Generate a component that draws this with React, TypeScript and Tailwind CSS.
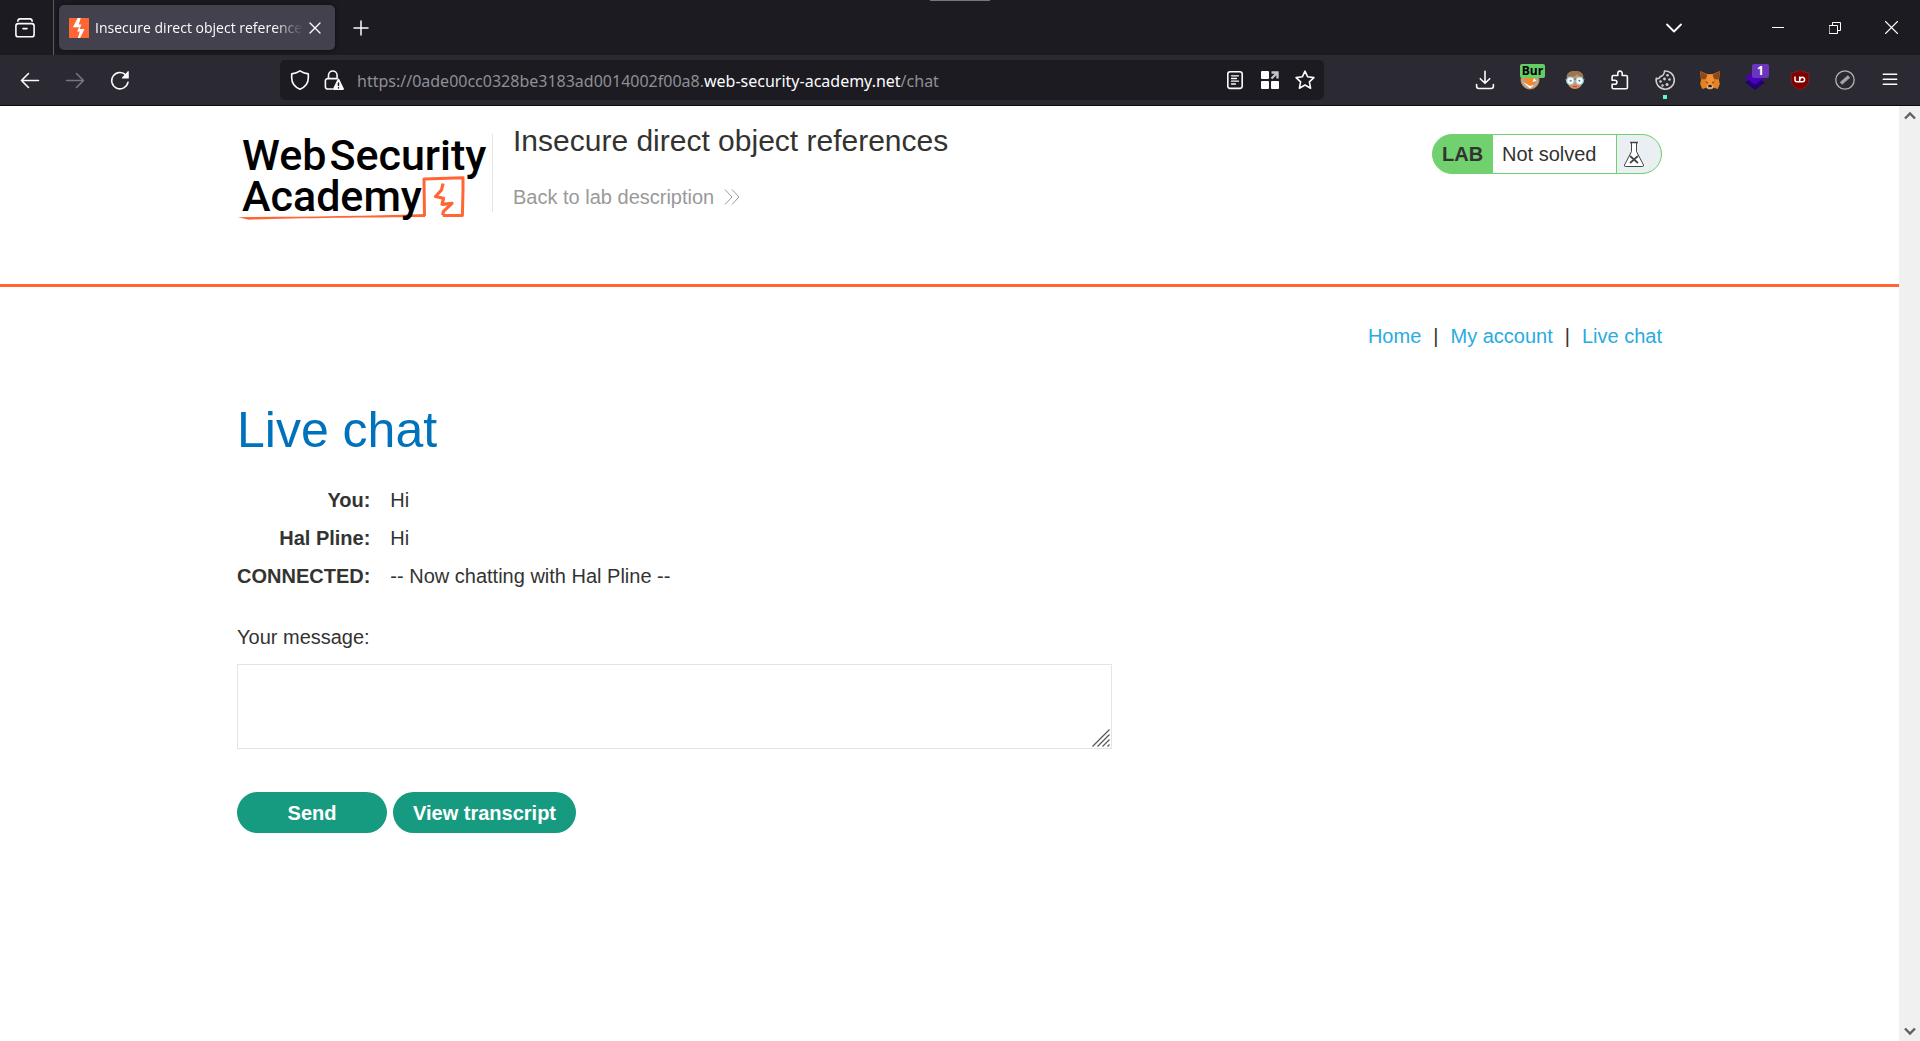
import React from "react";

type IconProps = { children: React.ReactNode; className?: string; box?: string };

function Icon({ children, className = "size-5", box = "0 0 20 20" }: IconProps) {
  return (
    <svg
      viewBox={box}
      className={className}
      fill="none"
      stroke="currentColor"
      strokeWidth="1.6"
      strokeLinecap="round"
      strokeLinejoin="round"
      aria-hidden="true"
    >
      {children}
    </svg>
  );
}

function ToolButton({ label, children, className = "" }: { label: string; children: React.ReactNode; className?: string }) {
  return (
    <button type="button" aria-label={label} className={`relative flex h-10 w-[45px] shrink-0 items-center justify-center ${className}`}>
      {children}
    </button>
  );
}

function TabBar() {
  return (
    <div className="relative flex h-[55px] items-center bg-[#1c1b22] text-[#fbfbfe]">
      <div className="absolute left-1/2 top-0 h-px w-[60px] -translate-x-1/2 bg-[#77767c]" />
      <button type="button" aria-label="Firefox View" className="flex h-full w-[54px] items-center justify-center border-r border-[#5b5a62] pr-1">
        <Icon>
          <rect x="0.9" y="5.6" width="18.2" height="13.2" rx="2.4" />
          <path d="M2.800 3.200C3 1.600 3.700.9 5 .9h10c1.300 0 2 .7 2.200 2.300M8 10.600h4" />
        </Icon>
      </button>
      <div className="ml-[5px] flex h-[45px] w-[276px] items-center rounded-[5px] bg-[#42414d] pl-[10px] pr-2 shadow-[0_0_4px_rgba(0,0,0,0.6)]">
        <svg viewBox="0 0 20 20" className="size-5 shrink-0" aria-hidden="true">
          <path fill="#ff6633" d="M0 0h20v20H0z" />
          <path fill="#fff" d="M8.700 0h3L9.800 6.600h2.500L10.600 11h4.900L11 20H8.900l1.800-6.600H8.200L10 9.200H3.900z" />
        </svg>
        <span className="ml-[6px] flex-1 overflow-hidden whitespace-nowrap font-['Open_Sans',sans-serif] text-[14px] [mask-image:linear-gradient(to_right,black_86%,transparent)]">
          Insecure direct object references
        </span>
        <button type="button" aria-label="Close tab" className="flex size-6 items-center justify-center">
          <Icon className="size-3" box="0 0 12 12">
            <path strokeWidth="1.400" d="m1 1 10 10M11 1 1 11" />
          </Icon>
        </button>
      </div>
      <button type="button" aria-label="New tab" className="ml-[6px] flex size-10 items-center justify-center">
        <Icon className="size-4" box="0 0 16 16">
          <path strokeWidth="1.500" d="M8 1v14M1 8h14" />
        </Icon>
      </button>
      <div className="flex-1" />
      <button type="button" aria-label="List all tabs" className="mr-[55px] flex size-10 items-center justify-center">
        <Icon className="size-4" box="0 0 16 16">
          <path strokeWidth="1.800" d="m1 4.500 7 7 7-7" />
        </Icon>
      </button>
      <button type="button" aria-label="Minimize" className="flex h-full w-[57px] items-center justify-center">
        <Icon className="h-3 w-3" box="0 0 12 12">
          <path strokeWidth="1" strokeLinecap="butt" d="M0 5.500h12" />
        </Icon>
      </button>
      <button type="button" aria-label="Restore" className="flex h-full w-[57px] items-center justify-center">
        <Icon className="h-3 w-3" box="0 0 12 12">
          <path strokeWidth="1" strokeLinejoin="miter" d="M.5 3.500h8v8h-8zM3.500 3.500v-3h8v8h-3" />
        </Icon>
      </button>
      <button type="button" aria-label="Close window" className="flex h-full w-[57px] items-center justify-center">
        <Icon className="size-[13px]" box="0 0 13 13">
          <path strokeWidth="1.100" d="m.5.5 12 12M12.500.5l-12 12" />
        </Icon>
      </button>
    </div>
  );
}

function AddressBar() {
  return (
    <div className="mx-[138px] flex h-10 min-w-0 flex-1 items-center rounded-[5px] bg-[#1c1b22]">
      <button type="button" aria-label="Tracking protection" className="ml-[10px] flex size-5 items-center justify-center">
        <Icon>
          <path d="M10 .9c2.400 1.700 5 2.500 8.300 3v4c0 5.200-3 9-8.300 11.300C4.700 17 1.700 13.200 1.700 8V3.900C5 3.400 7.600 2.600 10 .9z" />
        </Icon>
      </button>
      <button type="button" aria-label="Site information" className="ml-[14px] flex size-5 items-center justify-center">
        <Icon>
          <path d="M4.500 8.500V5.300a4.300 4.300 0 0 1 8.600 0v3.200M8.500 19H3.600A2.200 2.200 0 0 1 1.400 16.800v-6a2.200 2.200 0 0 1 2.200-2.200h9.600" />
          <path fill="currentColor" stroke="none" d="M13.600 9.200a1 1 0 0 1 1.700 0l4.500 9.200a1 1 0 0 1-.9 1.500H10a1 1 0 0 1-.9-1.500z" />
          <path stroke="#1c1b22" strokeWidth="1.500" d="M14.500 13v2.500M14.500 17.800v.1" />
        </Icon>
      </button>
      <div className="ml-[13px] min-w-0 flex-1 truncate pt-0.5 font-['Noto_Sans',sans-serif] text-[16px] text-[#8f8f95]">
        https://0ade00cc0328be3183ad0014002f00a8.<span className="text-[#fbfbfe]">web-security-academy.net</span>/chat
      </div>
      <button type="button" aria-label="Reader view" className="flex w-[35px] justify-center">
        <Icon>
          <rect x="2.800" y="1.800" width="14.400" height="16.600" rx="2.300" />
          <path strokeWidth="1.300" d="M6.500 5.800h7M6.500 8.500h5M6.500 11.200h7M6.500 14h4" />
        </Icon>
      </button>
      <button type="button" aria-label="Open in container" className="flex w-[35px] justify-center">
        <svg viewBox="0 0 20 20" className="size-5" aria-hidden="true">
          <g fill="#fbfbfe">
            <rect x="1" y="1" width="8" height="8" rx="1" />
            <rect x="1" y="11" width="8" height="8" rx="1" />
            <rect x="11" y="11" width="8" height="8" rx="1" />
          </g>
          <path d="M11.500 2.500h6v6M17 3l-5.500 5.500" fill="none" stroke="#c4c4c8" strokeWidth="2.400" />
        </svg>
      </button>
      <button type="button" aria-label="Bookmark this page" className="mr-[2px] flex w-[35px] justify-center">
        <Icon>
          <path d="m10 1.200 2.700 5.600 6.200.8-4.500 4.200 1.200 6.400L10 15l-5.600 3.200 1.200-6.400-4.500-4.200 6.200-.8z" />
        </Icon>
      </button>
    </div>
  );
}

function Extensions() {
  return (
    <div className="mr-2 flex shrink-0">
      <ToolButton label="Downloads">
        <Icon>
          <path d="M10 1.200v12M5.300 8.700 10 13.300l4.700-4.600M1.600 14.500v1.800c0 1.300.8 2.200 2.200 2.200h12.400c1.400 0 2.200-.9 2.200-2.200v-1.800" />
        </Icon>
      </ToolButton>
      <ToolButton label="FoxyProxy">
        <svg viewBox="0 0 20 20" className="size-5" aria-hidden="true">
          <circle cx="10" cy="10" r="9" fill="#a9aaa9" stroke="#e08a3a" />
          <path fill="#f4872a" d="m2 5 6 3 9-3-1.500 8-5.500 4-5-4z" />
          <path fill="#fff" d="m3 12 7 4 4-1-4 3.500zM14 8l2.500 3-4 1z" />
        </svg>
        <span className="absolute left-[13px] top-[4px] flex h-[14px] w-[25px] items-center justify-center rounded-[2px] bg-[#66cc66] font-['Open_Sans',sans-serif] text-[12px] font-bold text-black">
          Bur
        </span>
      </ToolButton>
      <ToolButton label="User agent switcher">
        <svg viewBox="0 0 20 20" className="size-5" aria-hidden="true">
          <path fill="#d98b62" d="M2 8c0-5 3-7 8-7s8 2 8 7c0 7-3 11-8 11S2 15 2 8z" />
          <path fill="#9a7650" d="M1.500 7.500C1.500 3 5 1 10 1s8.500 2 8.500 6.500c-3 0-5.500-1-6.500-3.500-2 2.500-6 4.500-10.500 3.500z" />
          <path stroke="#4e555a" strokeWidth="1.600" d="M0 9.500h20" />
          <g fill="#f2fdff" stroke="#9ccfdc" strokeWidth="1.200">
            <circle cx="5.400" cy="10.800" r="3.700" />
            <circle cx="14.600" cy="10.800" r="3.700" />
          </g>
          <g fill="#5f7f88">
            <circle cx="5.600" cy="10.800" r="1" />
            <circle cx="14.400" cy="10.800" r="1" />
          </g>
          <path stroke="#a65243" d="M8 16.500h4" />
        </svg>
      </ToolButton>
      <ToolButton label="Extensions">
        <Icon>
          <path d="M5.500 5.500h2.300V3.300a2.200 2.200 0 0 1 4.400 0v2.200h3.900c.8 0 1.300.5 1.300 1.300v10.700c0 .8-.5 1.300-1.300 1.300H3.400c-.8 0-1.300-.5-1.300-1.300v-3.300h2.800a2 2 0 0 0 0-4H2.100V6.800c0-.8.5-1.300 1.300-1.300z" />
        </Icon>
      </ToolButton>
      <ToolButton label="Cookie editor" className="text-[#d0d0d4]">
        <Icon>
          <path d="M9.500 1a9.100 9.100 0 1 1-8.200 7.300c1.800.8 3.500 0 3.900-1.800C7.500 6.300 9.500 4 9.500 1z" />
          <g fill="currentColor" stroke="none">
            <circle cx="12.500" cy="5.200" r="1.300" />
            <circle cx="9.500" cy="9" r="1.400" />
            <circle cx="14.500" cy="9.500" r="1.300" />
            <circle cx="5.500" cy="11.500" r="1.300" />
            <circle cx="12" cy="14.500" r="1.500" />
            <circle cx="7.500" cy="15.500" r="1.200" />
          </g>
        </Icon>
        <span className="absolute bottom-[1px] size-1 bg-[#54ffbd]" />
      </ToolButton>
      <ToolButton label="MetaMask">
        <svg viewBox="0 0 20 20" className="size-5" aria-hidden="true">
          <path fill="#e8821e" d="m0 1 7 3h6l7-3-1 9 .8 4-2 5-4-1.200-2.200 1.500H8.400l-2.200-1.500-4 1.200-2-5L1 10z" />
          <path fill="#8f4a1c" d="m0 1 7.500 4-1.500 4-4.500.5zM20 1l-7.500 4 1.500 4 4.500.5z" />
          <path fill="#f59035" d="m6 9 1.500-4h5L14 9l-2 6H8z" />
          <path fill="#243447" d="m5 11 3 1.500-.5 1zM15 11l-3 1.500.5 1z" />
          <path fill="#d8cbbb" d="m7 15.500 6-.1-.5 3.200h-5z" />
          <path fill="#20222a" d="M8.500 15h3l.4 2.200H8.100z" />
        </svg>
      </ToolButton>
      <ToolButton label="Wappalyzer">
        <svg viewBox="0 0 20 20" className="size-5" aria-hidden="true">
          <path fill="#230073" d="M0 12.500 10 6l10 6.500L10 20z" />
          <path fill="#4a00b8" d="M0 7.500 10 0l10 7.500-10 7z" />
        </svg>
        <span className="absolute left-[20px] top-[4px] flex h-[14px] w-[17px] items-center justify-center rounded-[2px] bg-[#6b35bd] font-['Open_Sans',sans-serif] text-[12px] font-bold text-white">
          1
        </span>
      </ToolButton>
      <ToolButton label="uBlock Origin">
        <svg viewBox="0 0 20 20" className="size-5" aria-hidden="true">
          <path fill="#800000" stroke="#8f3b40" strokeWidth=".5" d="M10 0c2.500 1.800 5 2.500 9 3v6c0 5-3 8.500-9 11-6-2.500-9-6-9-11V3c4-.5 6.500-1.200 9-3z" />
          <path d="M5 6.500v3.300c0 1.400.6 2 1.900 2h2.800V6.500M9.700 11.800h2.600a2.300 2.300 0 0 0 0-4.600 2.300 2.300 0 0 0-2.300 2.300" fill="none" stroke="#fff" strokeWidth="1.500" />
        </svg>
      </ToolButton>
      <ToolButton label="Disabled extension">
        <svg viewBox="0 0 20 20" className="size-5" fill="none" aria-hidden="true">
          <circle cx="10" cy="10" r="9.200" stroke="#b4b4b8" strokeWidth="1.300" />
          <path d="m6 13.500 8-7" stroke="#a5a5a9" strokeWidth="3.500" />
          <path d="m7.500 14 7-6" stroke="#6a6970" strokeWidth="1" strokeDasharray="1 1" />
        </svg>
      </ToolButton>
      <ToolButton label="Open application menu">
        <Icon>
          <path strokeWidth="1.500" d="M3.300 4.200h13.400M3.300 9.200h13.400M3.300 14.200h13.400" />
        </Icon>
      </ToolButton>
    </div>
  );
}

function Toolbar() {
  return (
    <div className="flex h-[51px] items-center border-b border-[#0c0c0d] bg-[#2b2a33] text-[#fbfbfe]">
      <div className="flex shrink-0 pl-[7px]">
        <ToolButton label="Back">
          <Icon>
            <path d="M18.500 10.500h-17M8.500 3.500l-7 7 7 7" />
          </Icon>
        </ToolButton>
        <ToolButton label="Forward" className="text-[#77767c]">
          <Icon>
            <path d="M1.500 10.500h17M11.500 3.500l7 7-7 7" />
          </Icon>
        </ToolButton>
        <ToolButton label="Reload">
          <Icon>
            <path d="M18 12.200A8.200 8.200 0 1 1 16 5.100" />
            <path fill="currentColor" stroke="none" d="M18.800 1.700v6.200c0 .5-.3.700-.7.700h-5.500c-.8 0-1-.7-.5-1.200l5.500-6c.5-.5 1.200-.3 1.200.3z" />
          </Icon>
        </ToolButton>
      </div>
      <AddressBar />
      <Extensions />
    </div>
  );
}

function AcademyLogo() {
  return (
    <a href="#academy" className="relative flex h-[90px] w-[255px] shrink-0 flex-col pl-[5px] pt-[1px] font-['Roboto',sans-serif] text-[43px] font-medium leading-[41px] text-black">
      <svg viewBox="0 0 255 90" className="absolute left-0 top-0 h-[90px] w-[255px]" fill="none" stroke="#ff6633" strokeLinejoin="round" aria-hidden="true">
        <path strokeWidth="3" d="M187.500 82 187 45l39-1.200 0 12-.6 25.600-19.600.2" />
        <path fill="#ff6633" stroke="none" d="M1 83.300c60-.8 125-1 187-3.300v3c-60 .5-130 1-176 2.700z" />
        <path strokeWidth="3.200" d="M206 49.500 204.500 56l-6 6.500 8 1.800-1.500 6 10-1-8.500 8-.8 4" />
      </svg>
      <span className="relative flex gap-[3px]">
        <span>Web</span>
        <span>Security</span>
      </span>
      <span className="relative">Academy</span>
    </a>
  );
}

function LabStatus() {
  return (
    <div className="flex h-10 overflow-hidden rounded-full border border-[#71d16e] bg-[#71d16e] text-[20px] leading-[38px]">
      <span className="w-[60px] pl-[9px] font-bold">LAB</span>
      <span className="w-[123px] bg-white pl-[9px]">Not solved</span>
      <span className="ml-px flex w-[44px] items-center bg-[#eaeff3] pl-[6px]">
        <svg viewBox="0 0 22 26" className="h-[26px] w-[22px]" fill="none" stroke="#444" aria-hidden="true">
          <path fill="#fff" d="M8.500 1.500v9L1.500 24q-.3 1.500 1 1.500h17q1.300 0 1-1.500l-7-13.500v-9z" />
          <path strokeWidth="1.500" d="M7 1.500h8" />
          <path strokeWidth="1.700" d="m7 15 8 7M15 15l-8 7" />
        </svg>
      </span>
    </div>
  );
}

function PageHeader() {
  return (
    <header className="h-[181px] border-b-[3px] border-[#ff6633]">
      <div className="mx-auto flex max-w-[1425px] items-start pt-[28px]">
        <AcademyLogo />
        <div className="h-[78px] border-l border-[#e4e4e4]" />
        <div className="pl-5">
          <h2 className="-mt-[11px] text-[30px] leading-9">Insecure direct object references</h2>
          <a href="#lab" className="mt-[26px] flex items-center gap-[10px] text-[20px] leading-6 text-[#999]">
            Back to lab description
            <svg viewBox="0 0 16 16" className="size-4" fill="none" stroke="#999" aria-hidden="true">
              <path d="m1 .5 7 7.500-7 7.500M8 .5l7 7.500-7 7.500" />
            </svg>
          </a>
        </div>
        <div className="ml-auto">
          <LabStatus />
        </div>
      </div>
    </header>
  );
}

const messages = [
  { from: "You:", text: "Hi" },
  { from: "Hal Pline:", text: "Hi" },
  { from: "CONNECTED:", text: "-- Now chatting with Hal Pline --" },
];

function Chat() {
  return (
    <main className="mx-auto max-w-[1425px] text-[20px] leading-6">
      <nav className="flex justify-end gap-3 pt-[37px]">
        <a href="#home" className="text-[#29abe2]">Home</a>
        <span>|</span>
        <a href="#account" className="text-[#29abe2]">My account</a>
        <span>|</span>
        <a href="#chat" className="text-[#29abe2]">Live chat</a>
      </nav>
      <h1 className="mt-[52px] text-[50px] leading-[60px] text-[#0072bc]">Live chat</h1>
      <table className="mt-[21px]">
        <tbody>
          {messages.map((m) => (
            <tr key={m.from} className="h-[38px]">
              <th scope="row" className="pr-5 text-right font-bold">{m.from}</th>
              <td>{m.text}</td>
            </tr>
          ))}
        </tbody>
      </table>
      <form onSubmit={(e) => e.preventDefault()}>
        <label htmlFor="message" className="mt-[30px] block">Your message:</label>
        <div className="relative mt-[15px] h-[85px] max-w-[875px]">
          <textarea id="message" name="message" className="block size-full resize-none border border-[#e4e4e4] bg-white p-2 outline-none" />
          <svg viewBox="0 0 18 18" className="pointer-events-none absolute bottom-[2px] right-[2px] size-[18px]" fill="none" stroke="#555" aria-hidden="true">
            <path strokeWidth="1.200" d="M.5 17.500l17-17M5.500 17.500l12-12M10.500 17.500l7-7M15.500 17.500l2-2" />
          </svg>
        </div>
        <div className="mt-[43px] flex gap-[6px] font-bold text-white">
          <button type="submit" className="h-[41px] w-[150px] rounded-full bg-[#179b80]">Send</button>
          <button type="button" className="h-[41px] w-[183px] rounded-full bg-[#179b80]">View transcript</button>
        </div>
      </form>
    </main>
  );
}

function Scrollbar() {
  return (
    <div className="flex w-[21px] shrink-0 flex-col items-center justify-between bg-[#f0f0f0] py-1 text-[#606060]">
      <Icon className="size-3" box="0 0 12 12">
        <path strokeWidth="2.400" strokeLinecap="butt" strokeLinejoin="miter" d="m1 8.500 5-5 5 5" />
      </Icon>
      <Icon className="size-3" box="0 0 12 12">
        <path strokeWidth="2.400" strokeLinecap="butt" strokeLinejoin="miter" d="m1 3.500 5 5 5-5" />
      </Icon>
    </div>
  );
}

export default function App() {
  return (
    <div className="flex min-h-screen flex-col bg-white font-['Liberation_Sans',Arial,sans-serif] text-[#333332]">
      <TabBar />
      <Toolbar />
      <div className="flex flex-1">
        <div className="min-w-0 flex-1">
          <PageHeader />
          <Chat />
        </div>
        <Scrollbar />
      </div>
    </div>
  );
}
